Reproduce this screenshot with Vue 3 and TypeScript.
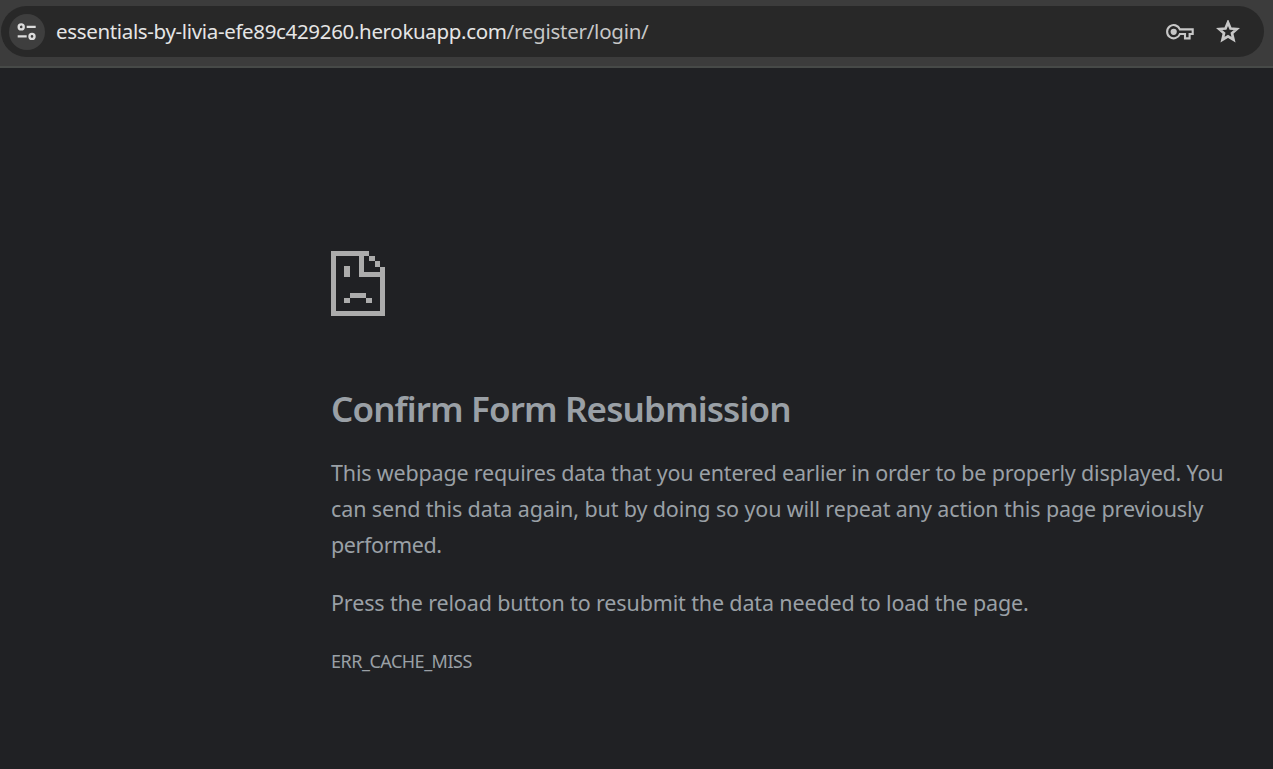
<script setup lang="ts">
const host: string = 'essentials-by-livia-efe89c429260.herokuapp.com'
const path: string = '/register/login/'
const lines: string[] = [
  'This webpage requires data that you entered earlier in order to be properly displayed. You',
  'can send this data again, but by doing so you will repeat any action this page previously',
  'performed.',
]
</script>

<template>
  <div class="window">
    <header class="toolbar">
      <div class="omnibox">
        <span class="site-info">
          <svg width="20" height="18" viewBox="0 0 20 18" fill="none" stroke="#dcdcdc" stroke-width="2.4">
            <circle cx="4.2" cy="3.9" r="2.5" />
            <path d="M9.7 3.9h9M.7 13.4h9" />
            <circle cx="15" cy="13.4" r="2.5" />
          </svg>
        </span>
        <span class="url"><span class="host">{{ host }}</span><span class="path">{{ path }}</span></span>
        <svg class="key" width="28" height="16" viewBox="0 0 28 16" fill="none" stroke="#c7c7c7">
          <path d="M13.9 5.4A6.6 6.6 0 1 0 13.9 10H19V14.4H23.6V10H26.7V5.4Z" stroke-width="2.1" />
          <circle cx="7.7" cy="7.8" r="3.1" fill="#c7c7c7" stroke="none" />
        </svg>
        <svg class="star" width="24" height="24" viewBox="0 0 24 24">
          <path fill="none" stroke="#c7c7c7" stroke-width="2.7" d="M12 2.4L14.5 8.5 20.9 9 16 13.3 17.5 19.7 12 16.4 6.5 19.7 8 13.3 3.1 9 9.5 8.5Z" />
        </svg>
      </div>
    </header>
    <main class="page">
      <svg class="sad-page" width="54" height="65" viewBox="0 0 162 195" preserveAspectRatio="none" fill="#acacac" shape-rendering="crispEdges">
        <path d="M0 0H115V15H131V31H147V47H162V195H0ZM16 15V179H147V78H84V15ZM99 15V62H147V47H131V31H115V15Z" fill-rule="evenodd" />
        <path d="M40 45H56V78H40ZM57 125H105V141H57ZM40 141H57V156H40ZM105 141H122V156H105Z" />
      </svg>
      <h1>Confirm Form Resubmission</h1>
      <p class="summary">
        <span v-for="(line, i) in lines" :key="i" class="line" :class="'line-' + i">{{ line }}</span>
      </p>
      <p class="hint">Press the reload button to resubmit the data needed to load the page.</p>
      <div class="code">ERR_CACHE_MISS</div>
    </main>
  </div>
</template>

<style>
body {
  background: #202124;
}
</style>

<style scoped>
.window {
  height: 769px;
  overflow: hidden;
  background: #202124;
  color: #9aa0a6;
  font-family: "Segoe UI", "Noto Sans", "Open Sans", sans-serif;
  white-space: nowrap;
}
.toolbar {
  box-sizing: border-box;
  height: 68px;
  padding: 6px 9px 0 1px;
  background: #3c3c3c;
  border-bottom: 2px solid #474a48;
}
.omnibox {
  box-sizing: border-box;
  display: flex;
  align-items: center;
  height: 51px;
  padding: 0 24px 0 7.5px;
  border-radius: 26px;
  background: #282828;
}
.site-info {
  display: flex;
  align-items: center;
  justify-content: center;
  width: 36px;
  height: 36px;
  border-radius: 50%;
  background: #3e3e3e;
}
.url {
  flex: 1;
  margin-left: 11.5px;
  font-size: 20.5px;
  line-height: 50px;
  padding-bottom: 2px;
}
.host {
  color: #e5e5e5;
  letter-spacing: -0.34px;
}
.path {
  color: #c7c7c7;
  letter-spacing: -0.25px;
}
.key {
  margin-right: 22px;
}
.page {
  padding: 183px 0 0 331px;
}
.sad-page {
  display: block;
}
h1 {
  margin: 69px 0 0;
  font-size: 35px;
  font-weight: 600;
  line-height: 48px;
  letter-spacing: -0.88px;
}
p {
  margin: 0;
  font-size: 21.5px;
  line-height: 36px;
}
.summary {
  margin-top: 22px;
}
.line {
  display: block;
  width: max-content;
}
.line-0 {
  letter-spacing: -0.18px;
}
.line-1 {
  letter-spacing: -0.12px;
}
.line-2 {
  letter-spacing: -0.4px;
}
.hint {
  margin-top: 22px;
  letter-spacing: -0.14px;
}
.code {
  margin-top: 22px;
  font-size: 18px;
  line-height: 36px;
  letter-spacing: -0.5px;
}
</style>
